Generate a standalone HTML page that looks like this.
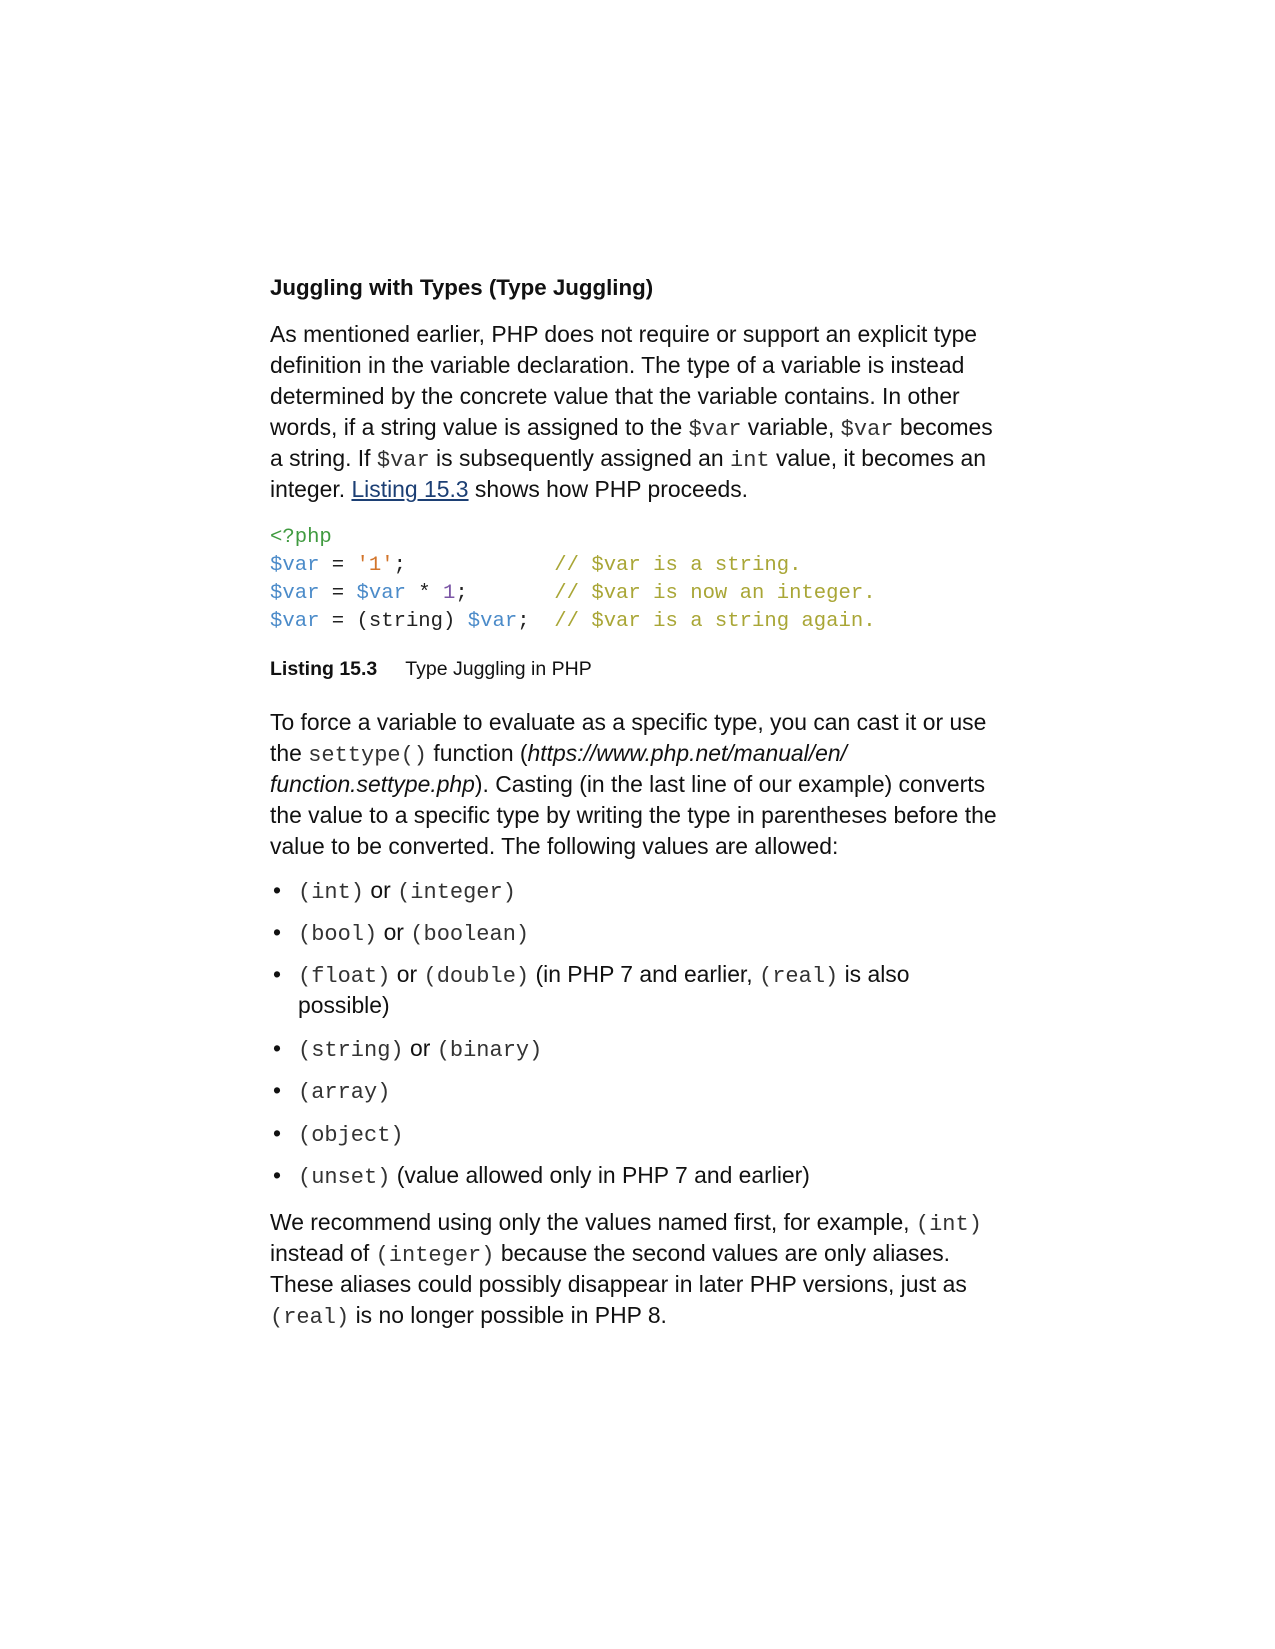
<!DOCTYPE html>
<html><head><meta charset="utf-8"><style>
body{margin:0;background:#fff;width:1275px;height:1649px;position:relative;font-family:"Liberation Sans",sans-serif;color:#111;}
.a{position:absolute;left:270px;white-space:nowrap;line-height:31px;}
p.l{position:absolute;left:270px;margin:0;font-size:22.9px;line-height:31.1px;white-space:nowrap;}
code{font-family:"Liberation Mono",monospace;font-size:22px;line-height:1;color:#333;}
.code{position:absolute;left:270px;top:524px;font-family:"Liberation Mono",monospace;font-size:20.6px;line-height:27.9px;white-space:pre;color:#222;}
.g{color:#3f9a3f}.v{color:#4b8bc9}.s{color:#d2742a}.n{color:#7b55a5}.c{color:#a9a636}
a{color:#1c3f74;text-decoration:underline}
.b{position:absolute;left:270px;font-size:22.9px;line-height:31px;white-space:nowrap}
.b span.d{display:inline-block;width:28px;text-indent:3px}
</style></head><body>
<div class="a" style="top:272px;font-weight:bold;font-size:22.3px;">Juggling with Types (Type Juggling)</div>
<p class="l" style="top:319px">As mentioned earlier, PHP does not require or support an explicit type<br>definition in the variable declaration. The type of a variable is instead<br>determined by the concrete value that the variable contains. In other<br>words, if a string value is assigned to the <code>$var</code> variable, <code>$var</code> becomes<br>a string. If <code>$var</code> is subsequently assigned an <code>int</code> value, it becomes an<br>integer. <a>Listing 15.3</a> shows how PHP proceeds.</p>
<div class="code"><span class="g">&lt;?php</span>
<span class="v">$var</span> = <span class="s">'1'</span>;            <span class="c">// $var is a string.</span>
<span class="v">$var</span> = <span class="v">$var</span> * <span class="n">1</span>;       <span class="c">// $var is now an integer.</span>
<span class="v">$var</span> = (string) <span class="v">$var</span>;  <span class="c">// $var is a string again.</span></div>
<div class="a" style="top:654px;font-size:19.5px;"><b>Listing 15.3</b><span style="display:inline-block;width:28px"></span>Type Juggling in PHP</div>
<p class="l" style="top:707px">To force a variable to evaluate as a specific type, you can cast it or use<br>the <code>settype()</code> function (<i>https://www.php.net/manual/en/<br>function.settype.php</i>). Casting (in the last line of our example) converts<br>the value to a specific type by writing the type in parentheses before the<br>value to be converted. The following values are allowed:</p>
<div class="b" style="top:875px"><span class="d">•</span><code>(int)</code> or <code>(integer)</code></div>
<div class="b" style="top:917px"><span class="d">•</span><code>(bool)</code> or <code>(boolean)</code></div>
<div class="b" style="top:959px;line-height:31px"><span class="d">•</span><code>(float)</code> or <code>(double)</code> (in PHP 7 and earlier, <code>(real)</code> is also<br><span class="d"></span>possible)</div>
<div class="b" style="top:1033px"><span class="d">•</span><code>(string)</code> or <code>(binary)</code></div>
<div class="b" style="top:1075px"><span class="d">•</span><code>(array)</code></div>
<div class="b" style="top:1118px"><span class="d">•</span><code>(object)</code></div>
<div class="b" style="top:1160px"><span class="d">•</span><code>(unset)</code> (value allowed only in PHP 7 and earlier)</div>
<p class="l" style="top:1207px">We recommend using only the values named first, for example, <code>(int)</code><br>instead of <code>(integer)</code> because the second values are only aliases.<br>These aliases could possibly disappear in later PHP versions, just as<br><code>(real)</code> is no longer possible in PHP 8.</p>
</body></html>
